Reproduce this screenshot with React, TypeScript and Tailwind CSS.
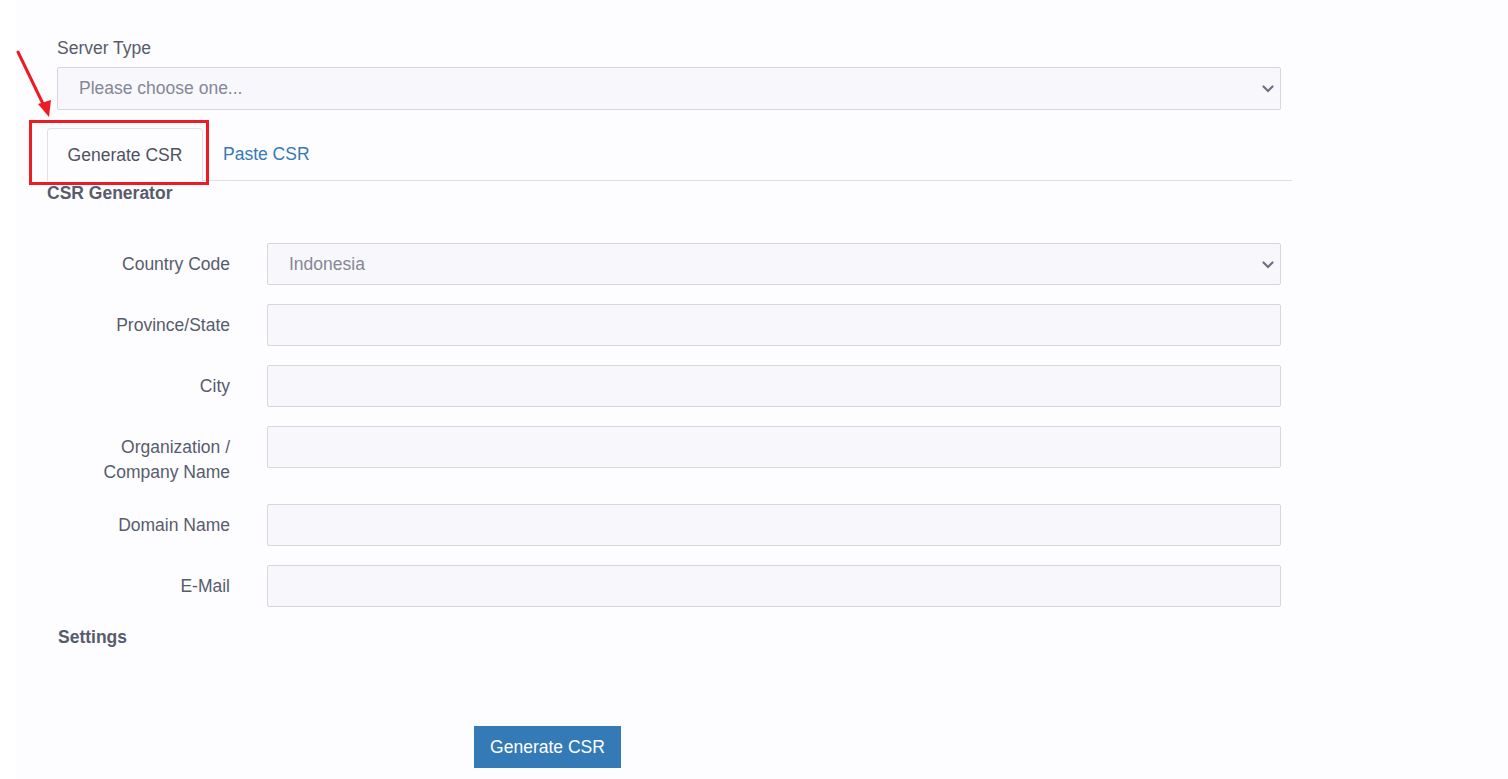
import React from "react";

const labelCls =
  "w-[173px] shrink-0 text-right text-[17.5px] leading-[25px] pt-[9px] text-[#575c6c]";
const inputCls =
  "h-[42px] w-[1014px] border border-[#d6d6db] bg-[#f8f7fb] rounded-[2px]";

function Chevron() {
  return (
    <svg width="12" height="8" viewBox="0 0 12 8" className="absolute right-[6px] top-[17px]">
      <path d="M1.5 1.5 L6 6 L10.5 1.5" fill="none" stroke="#6f7080" strokeWidth="2.2" strokeLinecap="round" />
    </svg>
  );
}

function Row({ label, children }: { label: React.ReactNode; children?: React.ReactNode }) {
  return (
    <div className="flex mb-[19px] pl-[10px]">
      <div className={labelCls}>{label}</div>
      <div className="ml-[37px] relative">{children ?? <div className={inputCls} />}</div>
    </div>
  );
}

export default function App() {
  return (
    <div className="min-h-screen bg-white" style={{ fontFamily: '"Liberation Sans", Arial, sans-serif' }}>
      <div className="ml-[16px] min-h-[779px] bg-[#fdfcfe] relative">
        <div className="ml-[31px] w-[1245px] pt-[36px]">
          {/* Server type */}
          <div className="px-[10px]">
            <div className="text-[17.5px] leading-[24px] text-[#575c6c]">Server Type</div>
            <div className="relative mt-[7px] h-[43px] w-[1224px] border border-[#d6d6db] bg-[#f8f7fb] rounded-[2px] flex items-center pl-[21px]">
              <span className="text-[17.5px] text-[#848897]">Please choose one...</span>
              <Chevron />
            </div>
          </div>

          {/* Tabs */}
          <div className="mt-[18px] flex items-end border-b border-[#dedee3]">
            <div className="-mb-px h-[53px] w-[156px] flex items-center justify-center border border-b-0 border-[#e0e0e5] rounded-t-[4px] bg-[#fdfcfe] text-[17.5px] text-[#4e5262]">
              Generate CSR
            </div>
            <div className="h-[52px] flex items-center pl-[20px] text-[17.5px] text-[#337ab7]">Paste CSR</div>
          </div>

          <div className="pt-[2px] text-[17.5px] leading-[20px] font-bold text-[#575c6c]">CSR Generator</div>

          <div className="mt-[40px]">
            <Row label="Country Code">
              <div className={inputCls + " flex items-center pl-[21px] relative"}>
                <span className="text-[17.5px] text-[#848897]">Indonesia</span>
                <Chevron />
              </div>
            </Row>
            <Row label="Province/State" />
            <Row label="City" />
            <Row
              label={
                <>
                  Organization /<br />
                  Company Name
                </>
              }
            />
            <Row label="Domain Name" />
            <Row label="E-Mail" />
          </div>

          <div className="pl-[11px] text-[17.5px] leading-[22px] font-bold text-[#575c6c]">Settings</div>

          <div className="mt-[78px] ml-[427px]">
            <button className="h-[42px] w-[147px] bg-[#337ab7] text-white text-[17.5px]">Generate CSR</button>
          </div>
        </div>
      </div>

      {/* Annotation overlay */}
      <div className="absolute left-[29px] top-[120px] w-[180px] h-[65px] border-[3px] border-[#ec1c24] pointer-events-none" />
      <svg className="absolute left-0 top-0 pointer-events-none" width="80" height="130">
        <line x1="18" y1="52" x2="45" y2="108" stroke="#ec1c24" strokeWidth="3" strokeLinecap="round" />
        <path d="M49 117 L38 104 L51 100 Z" fill="#ec1c24" />
      </svg>
    </div>
  );
}
